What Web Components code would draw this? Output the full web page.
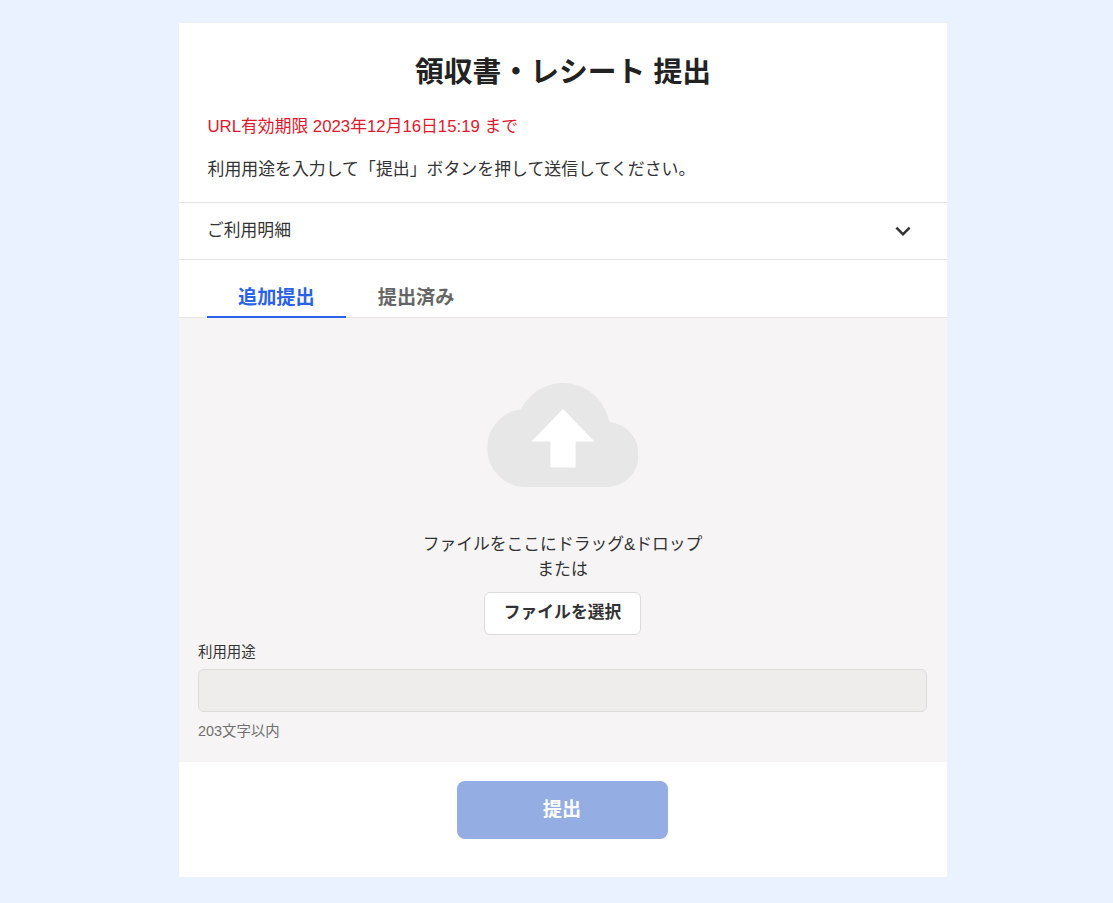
<!DOCTYPE html>
<html lang="ja">
<head>
<meta charset="utf-8">
<title>領収書・レシート 提出</title>
<style>
html,body{margin:0;padding:0;background:#eaf2ff;}
body{font-family:"Liberation Sans","Noto Sans CJK JP",sans-serif;color:#333;}
</style>
</head>
<body>
<receipt-page>
  <page-header title-text="領収書・レシート 提出">
    <span slot="notice">URL有効期限 2023年12月16日15:19 まで</span>
    利用用途を入力して「提出」ボタンを押して送信してください。
  </page-header>
  <detail-row>ご利用明細</detail-row>
  <tab-bar>
    <tab-item active>追加提出</tab-item>
    <tab-item>提出済み</tab-item>
  </tab-bar>
  <upload-panel>
    <drop-zone></drop-zone>
    <text-field label="利用用途" hint="203文字以内"></text-field>
  </upload-panel>
  <submit-bar>提出</submit-bar>
</receipt-page>
<script>
function def(name, html, init){
  customElements.define(name, class extends HTMLElement{
    constructor(){super();this.attachShadow({mode:"open"}).innerHTML=html;}
    connectedCallback(){ if(init) init(this); }
  });
}
def("receipt-page",`<style>
:host{display:block;width:768px;margin:23px 0 26px 179px;background:#fff;}
</style><slot></slot>`);

def("page-header",`<style>
:host{display:block;padding:25px 28px 0;}
h1{margin:0;height:48px;line-height:48px;font-size:28.8px;font-weight:700;text-align:center;color:#222;}
.notice{margin-top:19px;height:24px;line-height:24px;font-size:16.8px;color:#e0182d;padding-left:.5px;}
.desc{margin-top:19px;height:24px;line-height:24px;font-size:16.9px;padding:0 0 20px .5px;}
</style><h1></h1><div class="notice"><slot name="notice"></slot></div><div class="desc"><slot></slot></div>`,
el=>{el.shadowRoot.querySelector("h1").textContent=el.getAttribute("title-text");});

def("detail-row",`<style>
:host{display:flex;align-items:center;justify-content:space-between;height:56px;padding:0 29px 0 28px;border-top:1px solid #e4e4e4;border-bottom:1px solid #e4e4e4;font-size:16.8px;}
span{display:block;margin-top:-4px;}
svg{width:30px;height:30px;display:block;fill:#333;margin-top:-1px;}
</style><span><slot></slot></span><svg viewBox="0 0 24 24"><path d="M16.59 8.59L12 13.17 7.41 8.59 6 10l6 6 6-6z"/></svg>`);

def("tab-bar",`<style>
:host{display:flex;height:57px;padding:0 28px;align-items:flex-end;border-bottom:1px solid #e4e4e4;position:relative;}
</style><slot></slot>`);

def("tab-item",`<style>
:host{display:block;box-sizing:border-box;height:36px;line-height:31px;padding:0 31px 0 31px;font-size:19.2px;font-weight:700;color:#666;margin-bottom:-1px;}
:host(:not([active])){padding-left:32px;}
:host([active]){color:#2a62ea;border-bottom:2px solid #2a62ea;}
</style><slot></slot>`);

def("upload-panel",`<style>
:host{display:block;background:#f6f4f5;padding:0 20px 0 19px;height:444px;box-sizing:border-box;}
</style><slot></slot>`);

def("drop-zone",`<style>
:host{display:flex;flex-direction:column;align-items:center;padding-top:65px;}
svg{display:block;width:151.4px;height:104px;transform:translateX(.3px);}
.t1{margin-top:46px;height:24px;line-height:24px;font-size:16.8px;}
.t2{height:24px;line-height:24px;font-size:16.8px;margin-top:1px;}
button{display:block;box-sizing:border-box;margin-top:10px;width:157px;height:43px;background:#fff;border:1px solid #dcdcdc;border-radius:6px;font:700 16.8px "Liberation Sans","Noto Sans CJK JP",sans-serif;color:#333;padding:0 0 5px;}
</style>
<svg viewBox="0 4 24 16" preserveAspectRatio="none"><path fill="#e8e7e8" d="M19.35 10.04C18.67 6.59 15.64 4 12 4 9.11 4 6.6 5.64 5.35 8.04 2.34 8.36 0 10.91 0 14c0 3.31 2.69 6 6 6h13c2.76 0 5-2.24 5-5 0-2.64-2.05-4.78-4.65-4.96z"/><path fill="#fff" d="M14 13v4h-4v-4H7l5-5 5 5h-3z"/></svg>
<div class="t1">ファイルをここにドラッグ&amp;ドロップ</div>
<div class="t2">または</div>
<button type="button">ファイルを選択</button>`);

def("text-field",`<style>
:host{display:block;margin-top:7px;}
label{display:block;height:20px;line-height:20px;font-size:14.4px;}
.box{display:block;box-sizing:border-box;width:100%;height:43px;margin-top:7px;background:#eeedec;border:1px solid #dcdcdc;border-radius:6px;}
.hint{margin-top:9px;height:20px;line-height:20px;font-size:14.4px;color:#6f6f6f;}
</style><label></label><div class="box"></div><div class="hint"></div>`,
el=>{el.shadowRoot.querySelector("label").textContent=el.getAttribute("label");
el.shadowRoot.querySelector(".hint").textContent=el.getAttribute("hint");});

def("submit-bar",`<style>
:host{display:flex;justify-content:center;height:115px;padding:19px 2px 0 0;box-sizing:border-box;}
button{width:211px;height:58px;background:#94ade3;border:0;border-radius:8px;color:#fff;font:700 19.2px "Liberation Sans","Noto Sans CJK JP",sans-serif;padding:0 0 4px;}
</style><button type="button"><slot></slot></button>`);
</script>
</body>
</html>
